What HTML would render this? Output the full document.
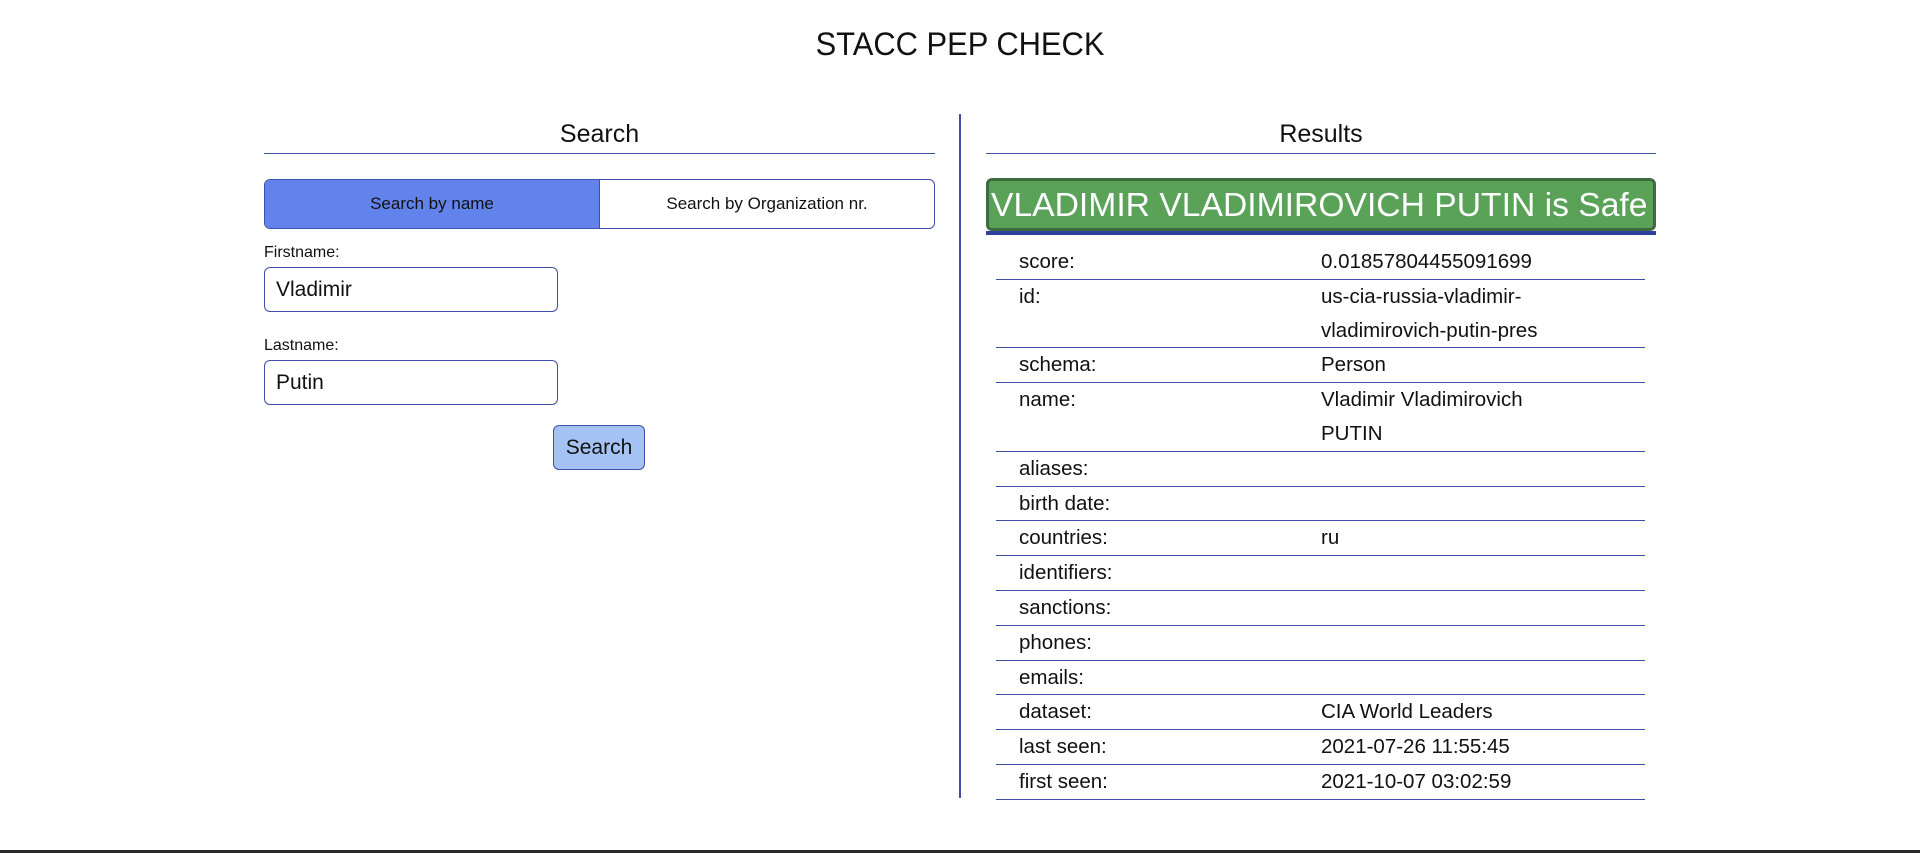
<!DOCTYPE html>
<html><head><meta charset="utf-8">
<style>
*{box-sizing:border-box;margin:0;padding:0}
body{width:1920px;height:853px;background:#fff;font-family:"Liberation Sans",sans-serif;color:#111;position:relative;overflow:hidden}
.abs{position:absolute}
.title{left:0;width:1920px;top:26px;text-align:center;font-size:32px;transform:scaleX(0.965)}
.h2{font-size:25px;text-align:center;top:120px}
.hr{height:1px;background:#3f4fa8;top:153px}
.toggle{left:264px;top:179px;width:671px;height:50px;border:1px solid #3f4fa8;border-radius:6px;overflow:hidden;display:flex;font-size:17px}
.toggle div{flex:1;display:flex;align-items:center;justify-content:center}
.toggle .on{background:#6383ec;border-right:1px solid #3f4fa8}
.lbl{font-size:16px;left:264px}
.inp{left:264px;width:294px;height:45px;border:1px solid #3f4fa8;border-radius:6px;font-size:21px;padding-left:11px;line-height:43px}
.btn{left:553px;top:425px;width:92px;height:45px;background:#a4c2f4;border:1px solid #3f4fa8;border-radius:6px;font-size:21px;text-align:center;line-height:43px}
.banner{left:986px;top:178px;width:670px;height:53px;background:#59a258;border:3px solid #3d6b3d;border-radius:6px;color:#fff;overflow:hidden;white-space:nowrap}
.banner span{display:inline-block;font-size:33px;line-height:47px;transform:scaleX(1.02);transform-origin:left center;margin-left:2px}
.bl{left:986px;top:231px;width:670px;height:4px;background:#3040a0}
.tbl{left:996px;top:235px;width:649px;font-size:20.5px}
.row{display:flex;border-bottom:1px solid #3f4fa8;line-height:33.8px}
.row .k{width:325px;padding-left:23px}
.row .v{width:300px}
</style></head><body>
<div class="abs title">STACC PEP CHECK</div>
<div class="abs h2" style="left:264px;width:671px">Search</div>
<div class="abs hr" style="left:264px;width:671px"></div>
<div class="abs h2" style="left:986px;width:670px">Results</div>
<div class="abs hr" style="left:986px;width:670px"></div>
<div class="abs" style="left:959px;top:114px;width:2px;height:684px;background:#3f4fa8"></div>
<div class="abs toggle"><div class="on">Search by name</div><div>Search by Organization nr.</div></div>
<div class="abs lbl" style="top:244px">Firstname:</div>
<div class="abs inp" style="top:267px">Vladimir</div>
<div class="abs lbl" style="top:337px">Lastname:</div>
<div class="abs inp" style="top:360px">Putin</div>
<div class="abs btn">Search</div>
<div class="abs banner"><span>VLADIMIR VLADIMIROVICH PUTIN is Safe</span></div>
<div class="abs bl"></div>
<div class="abs tbl">
<div class="row" style="padding-top:10px"><div class="k">score:</div><div class="v">0.01857804455091699</div></div>
<div class="row"><div class="k">id:</div><div class="v">us-cia-russia-vladimir-vladimirovich-putin-pres</div></div>
<div class="row"><div class="k">schema:</div><div class="v">Person</div></div>
<div class="row"><div class="k">name:</div><div class="v" style="width:260px">Vladimir Vladimirovich PUTIN</div></div>
<div class="row"><div class="k">aliases:</div><div class="v"></div></div>
<div class="row"><div class="k">birth date:</div><div class="v"></div></div>
<div class="row"><div class="k">countries:</div><div class="v">ru</div></div>
<div class="row"><div class="k">identifiers:</div><div class="v"></div></div>
<div class="row"><div class="k">sanctions:</div><div class="v"></div></div>
<div class="row"><div class="k">phones:</div><div class="v"></div></div>
<div class="row"><div class="k">emails:</div><div class="v"></div></div>
<div class="row"><div class="k">dataset:</div><div class="v">CIA World Leaders</div></div>
<div class="row"><div class="k">last seen:</div><div class="v">2021-07-26 11:55:45</div></div>
<div class="row"><div class="k">first seen:</div><div class="v">2021-10-07 03:02:59</div></div>
</div>
<div class="abs" style="left:0;top:850px;width:1920px;height:3px;background:#2a2a2a"></div>
</body></html>
